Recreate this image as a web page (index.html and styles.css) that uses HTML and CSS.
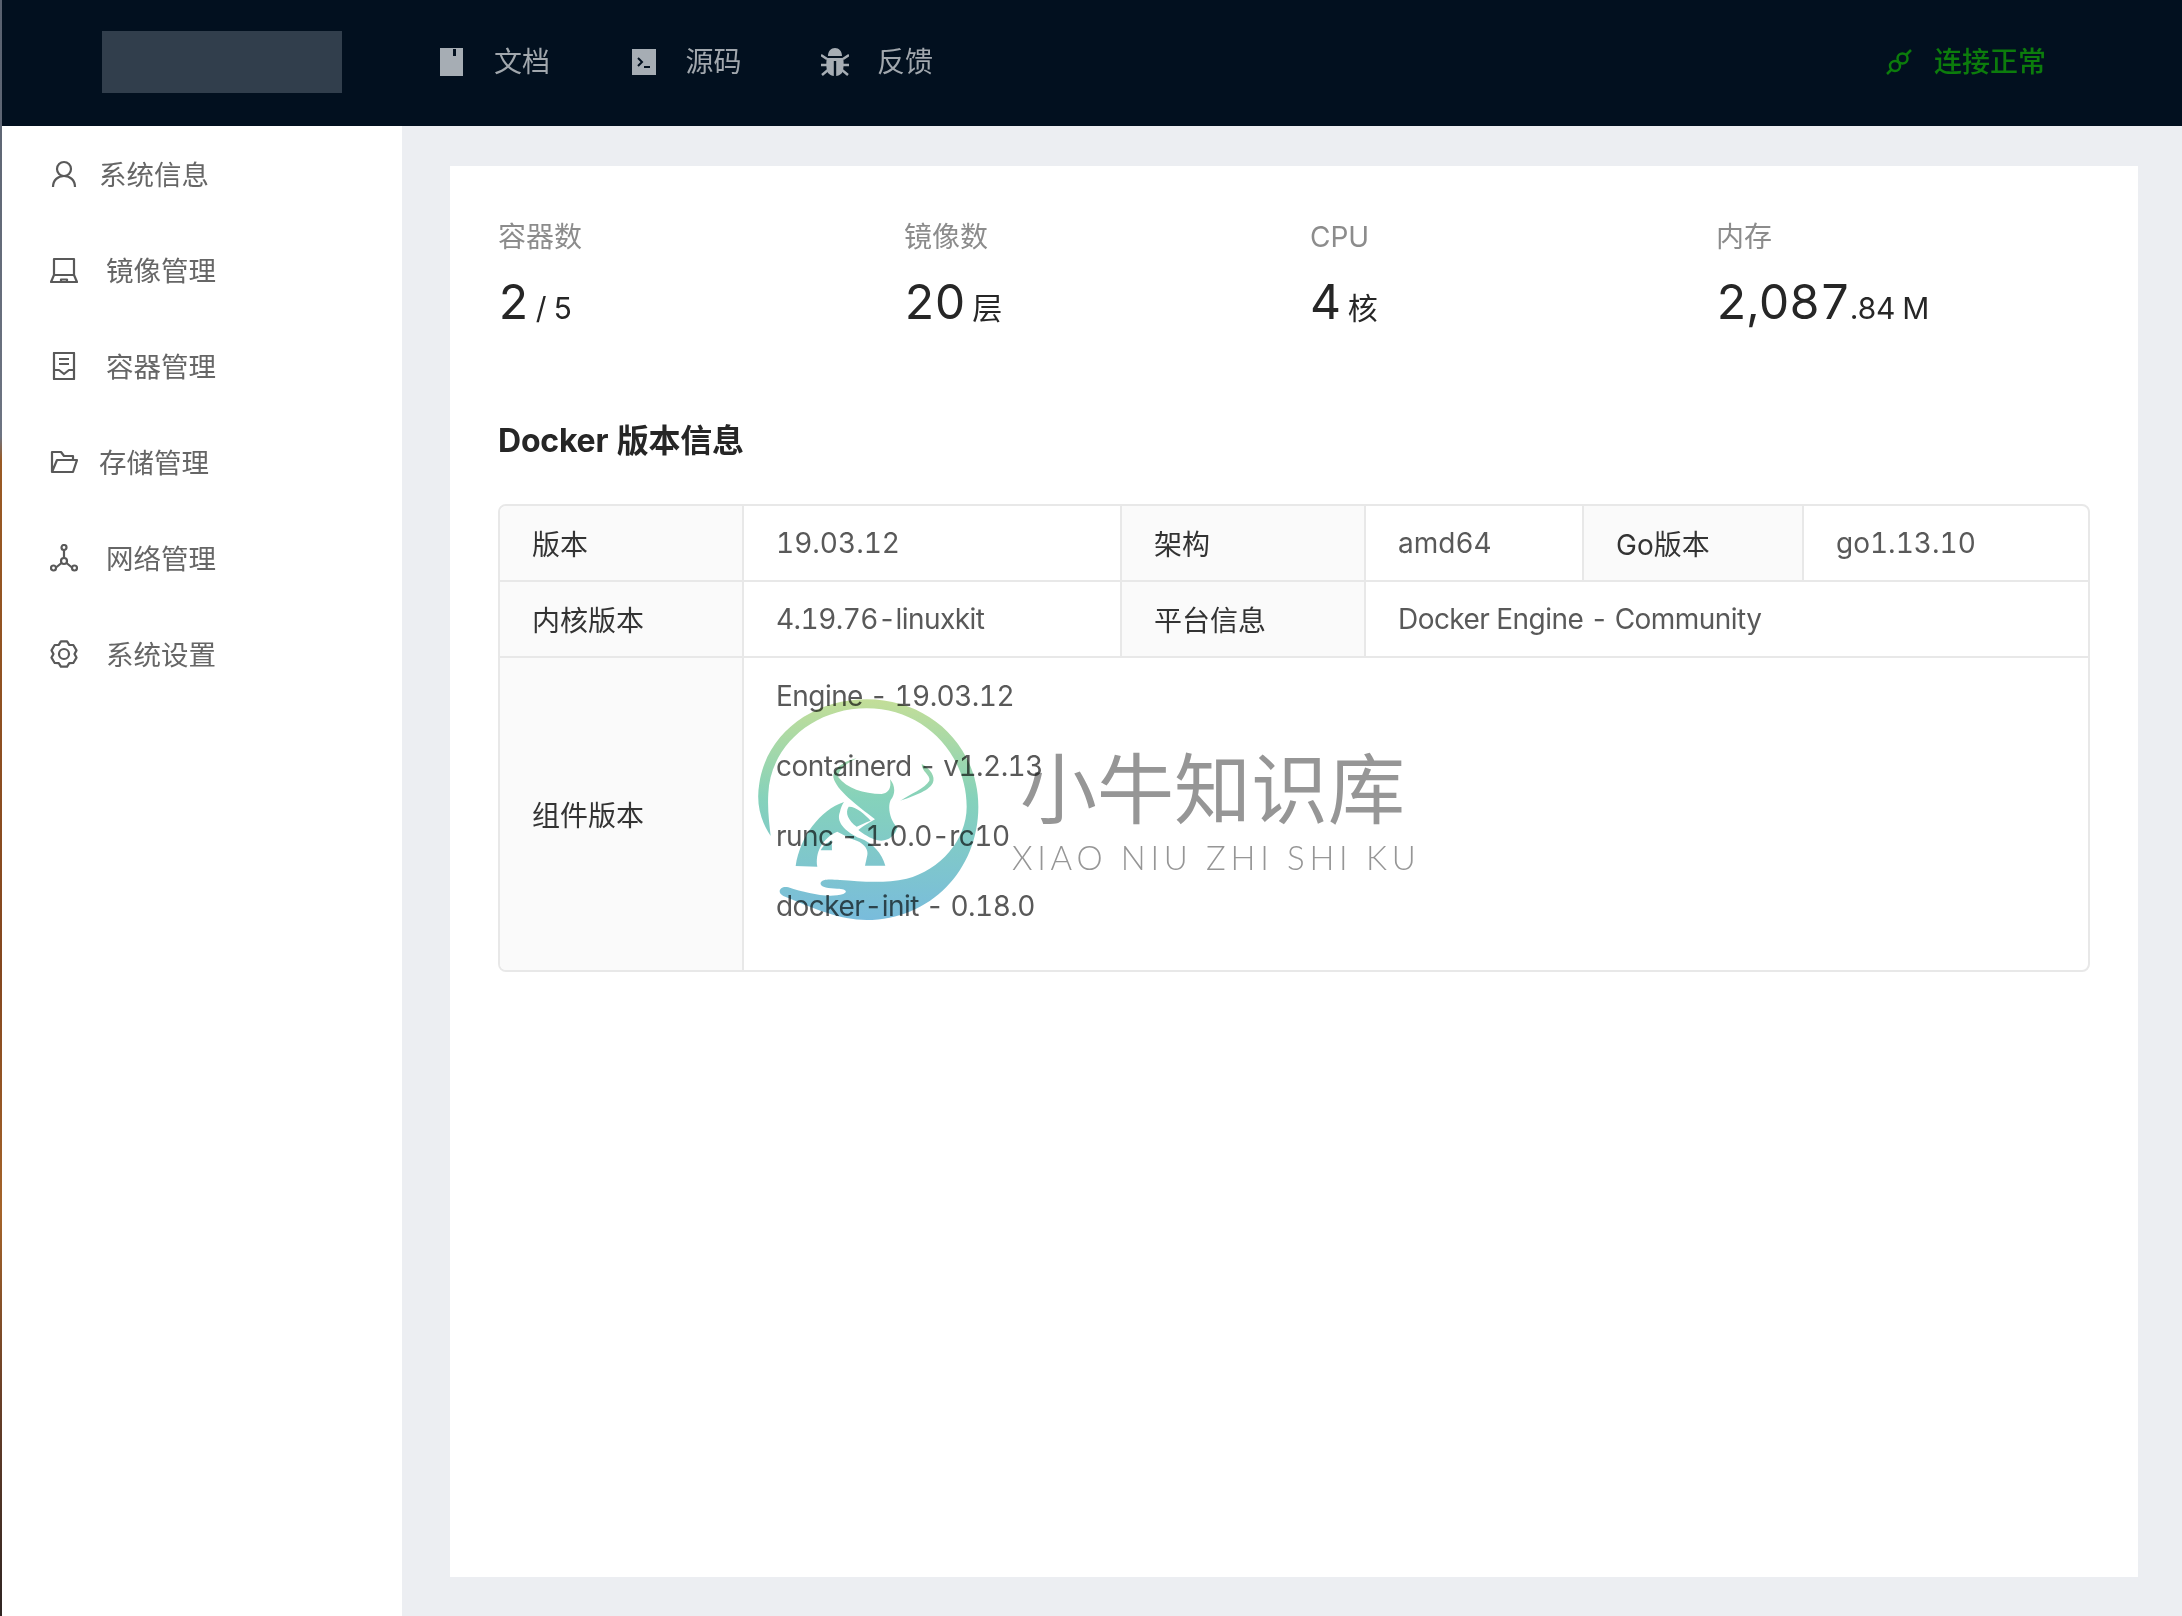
FILE: index.html
```html
<!DOCTYPE html>
<html lang="zh-CN">
<head>
<meta charset="UTF-8">
<meta name="viewport" content="width=device-width, initial-scale=1.0">
<link rel="stylesheet" href="styles.css">
<title>系统信息</title>
</head>
<body>
<div class="edge"></div>
<div class="app">
  <header class="topbar">
    <div class="logo"></div>
    <nav class="topnav">
      <a class="topnav-item">
        <svg class="nav-icon" viewBox="0 0 28 28"><path class="fill" d="M2 0H25V28H2Z"/><path class="cut" d="M15 1H18V8H15Z"/></svg>
        <span>文档</span>
      </a>
      <a class="topnav-item">
        <svg class="nav-icon" viewBox="0 0 28 28"><path class="fill" d="M2 1H26V27H2Z"/><path class="cut-line" d="M8 10L12 14L8 18M14 19H20"/></svg>
        <span>源码</span>
      </a>
      <a class="topnav-item">
        <svg class="nav-icon" viewBox="0 0 28 28"><path class="fill" d="M7 8C7 3 10 0 14 0C18 0 21 3 21 8ZM6 10H22C23 12 23 22 21 25C19 27 17 28 15.2 28V13H12.8V28C11 28 9 27 7 25C5 22 5 12 6 10Z"/><path class="fill-line" d="M0 7L6 11M28 7L22 11M0 17H6M28 17H22M1 27L7 22M27 27L21 22"/></svg>
        <span>反馈</span>
      </a>
    </nav>
    <div class="conn">
      <svg class="conn-icon" viewBox="0 0 26 26"><circle cx="16.500" cy="9.500" r="5"/><circle cx="9" cy="17" r="5"/><path d="M25 1L20 6M1 25L5.500 20.500"/></svg>
      <span>连接正常</span>
    </div>
  </header>

  <div class="main">
    <aside class="sidebar">
      <a class="side-item">
        <svg class="side-icon" viewBox="0 0 28 28"><circle cx="14" cy="9" r="7"/><path d="M3 27C3 20 8 16 14 16C20 16 25 20 25 27"/></svg>
        <span>系统信息</span>
      </a>
      <a class="side-item wide">
        <svg class="side-icon" viewBox="0 0 28 28"><path d="M4 19V3H24V19M1 26H27L24 19H4L1 26ZM11 26V23.500H17V26"/></svg>
        <span>镜像管理</span>
      </a>
      <a class="side-item wide">
        <svg class="side-icon" viewBox="0 0 28 28"><path d="M4 1H24V27H4ZM9 7H19M9 12H19M4 18H9L14 22L19 18H24"/></svg>
        <span>容器管理</span>
      </a>
      <a class="side-item">
        <svg class="side-icon" viewBox="0 0 28 28"><path d="M2 24V4H11L14 8H23V12M2 24L7 12H27L23 24Z"/></svg>
        <span>存储管理</span>
      </a>
      <a class="side-item wide">
        <svg class="side-icon" viewBox="0 0 28 28"><circle cx="14" cy="3.500" r="2.500"/><circle cx="3.500" cy="24" r="2.500"/><circle cx="24.500" cy="24" r="2.500"/><circle cx="14" cy="17" r="3"/><path d="M14 6V14M6 23.500L11.500 19M22 23.500L16.500 19"/></svg>
        <span>网络管理</span>
      </a>
      <a class="side-item wide">
        <svg class="side-icon" viewBox="0 0 28 28"><path d="M10.900 1.400H17.100L19.250 4.900L23.300 5L26.500 10.400L24.500 14L26.500 17.600L23.300 23L19.250 23.100L17.100 26.600H10.900L8.750 23.100L4.700 23L1.500 17.600L3.500 14L1.500 10.400L4.700 5L8.750 4.900Z"/><circle cx="14" cy="14" r="5"/></svg>
        <span>系统设置</span>
      </a>
    </aside>

    <main class="content">
      <section class="card">
        <div class="stats">
          <div class="stat">
            <div class="stat-title">容器数</div>
            <div class="stat-value">2<span class="stat-unit"> / 5</span></div>
          </div>
          <div class="stat">
            <div class="stat-title">镜像数</div>
            <div class="stat-value">20<span class="stat-unit"> 层</span></div>
          </div>
          <div class="stat">
            <div class="stat-title">CPU</div>
            <div class="stat-value">4<span class="stat-unit"> 核</span></div>
          </div>
          <div class="stat">
            <div class="stat-title">内存</div>
            <div class="stat-value">2,087<span class="stat-unit">.84 M</span></div>
          </div>
        </div>

        <h2 class="section-title">Docker 版本信息</h2>

        <div class="desc">
          <table class="desc-table">
            <colgroup>
              <col class="c1"><col class="c2"><col class="c3"><col class="c4"><col class="c5"><col class="c6">
            </colgroup>
            <tr>
              <th>版本</th><td class="num">19.03.12</td>
              <th>架构</th><td class="num">amd64</td>
              <th>Go版本</th><td class="num last">go1.13.10</td>
            </tr>
            <tr>
              <th>内核版本</th><td>4.19.76-linuxkit</td>
              <th>平台信息</th><td colspan="3" class="last">Docker Engine - Community</td>
            </tr>
            <tr class="tall">
              <th>组件版本</th>
              <td colspan="5" class="last">
                <div class="comp-list">
                  <div>Engine - 19.03.12</div>
                  <div>containerd - v1.2.13</div>
                  <div>runc - 1.0.0-rc10</div>
                  <div>docker-init - 0.18.0</div>
                </div>
              </td>
            </tr>
          </table>
        </div>
      </section>
    </main>
  </div>
</div>

<div class="watermark">
  <svg class="wm-logo" viewBox="0 0 720 720">
    <defs>
      <linearGradient id="wmGrad" gradientUnits="userSpaceOnUse" x1="0" y1="28" x2="0" y2="690">
        <stop offset="0" stop-color="#c3de98"/>
        <stop offset="0.45" stop-color="#85d2bb"/>
        <stop offset="1" stop-color="#79bcdc"/>
      </linearGradient>
    </defs>
    <g fill="url(#wmGrad)">
      <path d="M62 438C30 390 18 340 28 280C50 130 190 28 350 28C540 28 685 170 685 350C685 540 540 690 350 690C270 690 190 655 100 618C78 606 92 586 115 592C170 610 235 625 280 612C296 604 285 596 262 596C235 596 208 592 212 578C218 566 240 568 270 570C330 574 400 582 470 566C570 540 650 450 650 350C650 190 520 55 350 55C190 55 60 170 55 310C52 360 58 400 62 438Z"/>
      <path d="M320 205C285 212 248 235 250 262C258 300 320 345 375 388C350 402 335 412 325 420C340 432 360 445 380 450C410 458 435 440 442 412C420 392 412 352 422 330C438 310 435 285 420 268C425 295 415 310 395 312C340 312 290 295 265 262C262 240 290 220 320 205Z"/>
      <path d="M282 336C210 360 150 440 137 528L202 530C195 490 215 445 262 425C275 432 300 445 320 452C345 462 355 480 352 495L345 527H406C395 490 370 460 330 445C295 430 255 400 270 365C272 355 276 345 282 336Z"/>
      <path d="M296 350C315 348 345 372 362 392C345 398 330 405 320 410C295 392 284 368 296 350Z"/>
      <path d="M212 481H246L245 450C232 458 218 468 212 481Z"/>
      <path d="M515 222C540 235 558 260 548 280C535 305 485 320 450 333C480 312 525 295 538 272C542 255 515 245 515 222Z"/>
    </g>
  </svg>
  <div class="wm-text">
    <div class="wm-cn">小牛知识库</div>
    <div class="wm-en">XIAO NIU ZHI SHI KU</div>
  </div>
</div>
</body>
</html>
```

FILE: styles.css
```css
html, body { height: 100%; }
body {
  margin: 0;
  display: flex;
  overflow: hidden;
  font-family: Inter, "Noto Sans CJK SC", sans-serif;
  font-size: 28px;
  font-variant-numeric: tabular-nums;
  color: #595959;
  background: #eceef2;
}

.edge {
  width: 2px;
  flex: none;
  background: linear-gradient(#59616f 0, #6d7482 27%, #9a5a24 28.500%, #84471f 60%, #a5642a 75%, #6b4028 86%, #2f2523 100%);
}
.app { flex: 1; display: flex; flex-direction: column; min-width: 0; }

/* top bar */
.topbar {
  height: 126px;
  flex: none;
  display: flex;
  align-items: center;
  padding: 0 136px 3px 0;
  box-sizing: border-box;
  background: #02101f;
  color: #a1a7ad;
}
.logo { width: 240px; height: 62px; margin-left: 100px; background: #313e4c; }
.topnav { display: flex; align-items: center; gap: 79.500px; margin-left: 96px; }
.topnav-item { display: flex; align-items: center; gap: 28px; }
.topnav-item span, .conn span { padding-bottom: 3px; }
.nav-icon { width: 28px; height: 28px; }
.nav-icon .fill { fill: #a6adb4; }
.nav-icon .cut { fill: #02101f; }
.nav-icon .cut-line { fill: none; stroke: #02101f; stroke-width: 2; }
.nav-icon .fill-line { fill: none; stroke: #a6adb4; stroke-width: 2.500; }
.conn { margin-left: auto; display: flex; align-items: center; gap: 22px; color: #0c7c0c; font-weight: 500; }
.conn-icon { width: 26px; height: 26px; fill: none; stroke: #0c7c0c; stroke-width: 2.500; }

/* sidebar + content */
.main { flex: 1; display: flex; min-height: 0; }
.sidebar {
  width: 400px;
  flex: none;
  display: flex;
  flex-direction: column;
  gap: 16px;
  padding: 8px 0 0 48px;
  box-sizing: border-box;
  background: #fff;
}
.side-item { height: 80px; display: flex; align-items: center; gap: 21px; color: #666; font-size: 27.500px; }
.side-item span { padding-bottom: 3px; }
.side-item.wide { gap: 28px; }
.side-icon { width: 28px; height: 28px; flex: none; fill: none; stroke: #595959; stroke-width: 2.200; stroke-linejoin: round; }

.content { flex: 1; min-width: 0; padding: 40px 44px 39px 48px; display: flex; }
.card { flex: 1; min-width: 0; padding: 50px 48px; box-sizing: border-box; background: #fff; }

/* stats */
.stats { display: grid; grid-template-columns: repeat(4, 1fr); gap: 32px; }
.stat-title { height: 42px; line-height: 42px; color: #8c8c8c; }
.stat-value { height: 56px; line-height: 56px; margin-top: 16px; font-size: 48px; letter-spacing: -0.700px; color: #262626; }
.stat-unit { font-size: 30px; }

.section-title { margin: 89px 0 41px; height: 44px; line-height: 44px; font-size: 32px; font-weight: 700; letter-spacing: -0.200px; color: #262626; }

/* version table */
.desc { border: 2px solid #e8e8e8; border-radius: 8px; overflow: hidden; }
.desc-table { width: 100%; table-layout: fixed; border-collapse: separate; border-spacing: 0; }
.c1 { width: 244px; }
.c2 { width: 378px; }
.c3 { width: 244px; }
.c4 { width: 218px; }
.c5 { width: 220px; }
.desc-table th, .desc-table td {
  height: 74px;
  padding: 0 0 0 32px;
  border-right: 2px solid #e8e8e8;
  border-bottom: 2px solid #e8e8e8;
  text-align: left;
  font-weight: 400;
  white-space: nowrap;
}
.desc-table td { letter-spacing: -0.550px; }
.desc-table td.num { letter-spacing: 0; }
.desc-table th { background: #fafafa; color: #333; }
.desc-table td.last { border-right: 0; }
.desc-table .tall th, .desc-table .tall td { border-bottom: 0; height: 312px; }
.desc-table .tall td { vertical-align: top; padding-top: 17px; box-sizing: border-box; }
.comp-list { display: flex; flex-direction: column; gap: 28px; line-height: 42px; }

/* site watermark stamped over the shot */
.watermark { position: absolute; left: 750px; top: 690px; display: flex; mix-blend-mode: multiply; pointer-events: none; }
.wm-logo { width: 240px; height: 240px; flex: none; }
.wm-text { margin: 52px 0 0 22px; width: 410px; }
.wm-cn { height: 96px; line-height: 96px; margin-left: 8px; font-size: 77px; font-weight: 400; color: #969696; white-space: nowrap; }
.wm-en { font-family: Lato, sans-serif; font-weight: 300; font-size: 33px; line-height: 38px; letter-spacing: 4.700px; color: #969696; white-space: nowrap; }
```
